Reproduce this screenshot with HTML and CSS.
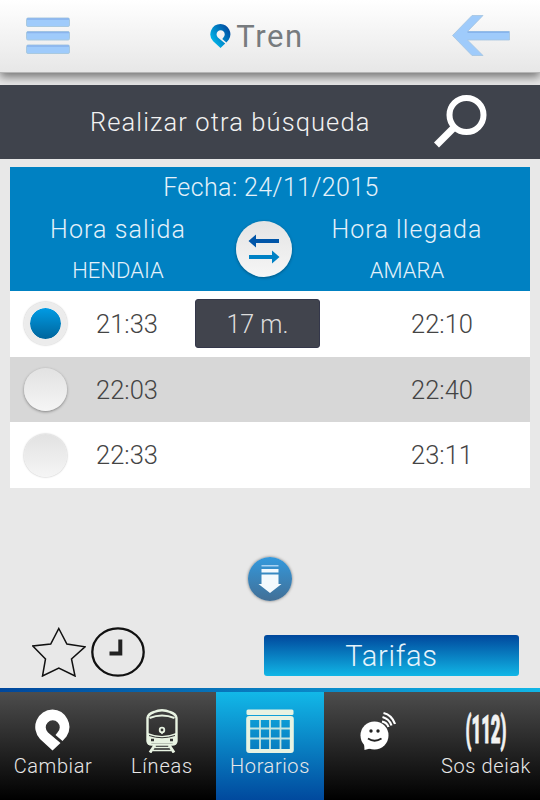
FILE: index.html
```html
<!DOCTYPE html>
<html lang="es">
<head>
    <meta charset="UTF-8">
    <meta name="viewport" content="width=device-width, initial-scale=1.0">
    <title>Tren - Horarios</title>
    <link rel="stylesheet" href="styles.css">
</head>
<body>
    <svg class="defs" width="0" height="0">
        <defs>
            <linearGradient id="pinGradient" x1="0" y1="1" x2="1" y2="0.2">
                <stop offset="0.2" stop-color="#00b4e8"/>
                <stop offset="1" stop-color="#00479d"/>
            </linearGradient>
            <symbol id="pin" viewBox="0 0 35 41">
                <path d="M17.500 0A17.500 17.500 0 0 1 31.500 27L27.500 31.500L20.500 25.500L22.500 23A7 7 0 1 0 13 23L25.500 33.500L17.500 41L5 29.500A17.500 17.500 0 0 1 17.500 0Z"/>
            </symbol>
        </defs>
    </svg>

    <header class="header">
        <svg class="menu-icon" width="44" height="38" viewBox="0 0 44 38">
            <g fill="#9fcbfb" stroke="#a9c9df">
                <rect x="0.5" y="1" width="43" height="8.500" rx="1.500"/>
                <rect x="0.5" y="14.500" width="43" height="8.500" rx="1.500"/>
                <rect x="0.5" y="28" width="43" height="8.500" rx="1.500"/>
            </g>
            <path d="M1 2h42M1 15.500h42M1 29h42" stroke="#8bb4ec" stroke-width="1.500"/>
        </svg>
        <div class="title">
            <svg class="title-pin" width="21" height="24"><use href="#pin"/></svg>
            <h1>Tren</h1>
        </div>
        <svg class="back-icon" width="58" height="42" viewBox="0 0 58 42">
            <path d="M0.500 20.500L20 0.500H31L15.500 16.500H57.500V25H15.500L31 40.500H20Z" fill="#9fcbfb" stroke="#a4c4e0" stroke-width="0.800"/>
            <path d="M15.500 17.200H57" stroke="#7fade8" stroke-width="1.200"/>
        </svg>
    </header>

    <div class="search">
        <span class="search-text">Realizar otra búsqueda</span>
        <svg class="search-icon" width="54" height="54" viewBox="0 0 54 54">
            <circle cx="33.500" cy="20" r="17" fill="none" stroke="#fff" stroke-width="6"/>
            <path d="M21 32.500L3.500 50" stroke="#fff" stroke-width="7"/>
        </svg>
    </div>

    <main class="content">
        <section class="schedule">
            <div class="schedule-head">
                <div class="date">Fecha: 24/11/2015</div>
                <div class="stop stop-from">
                    <div class="stop-label">Hora salida</div>
                    <div class="stop-name">HENDAIA</div>
                </div>
                <button class="swap" aria-label="Cambiar sentido">
                    <svg width="32" height="30" viewBox="0 0 32 30">
                        <path d="M0.500 7L8 0.500V5H31V9H8V13.500Z" fill="#0055a8"/>
                        <path d="M31.500 23L24 16.500V21H1V25H24V29.500Z" fill="#0081c5"/>
                    </svg>
                </button>
                <div class="stop stop-to">
                    <div class="stop-label">Hora llegada</div>
                    <div class="stop-name">AMARA</div>
                </div>
            </div>
            <div class="row">
                <span class="radio checked"></span>
                <span class="time">21:33</span>
                <span class="remaining">17 m.</span>
                <span class="time arrival">22:10</span>
            </div>
            <div class="row alt">
                <span class="radio"></span>
                <span class="time">22:03</span>
                <span class="time arrival">22:40</span>
            </div>
            <div class="row">
                <span class="radio"></span>
                <span class="time">22:33</span>
                <span class="time arrival">23:11</span>
            </div>
        </section>

        <button class="more" aria-label="Ver más">
            <svg width="24" height="28" viewBox="0 0 24 28">
                <path d="M3.500 0H20.500V1.500H3.500Z" fill="#a9d2f2"/>
                <path d="M3.500 4H20.500V7.500H3.500ZM3.500 9.500H20.500V19H23.500L12 28L0.500 19H3.500Z" fill="#f4f9fd"/>
            </svg>
        </button>

        <div class="actions">
            <svg class="star" width="54" height="50" viewBox="0 0 54 50">
                <path d="M26.800 1.500L34.900 17L53 19.800L39.500 32L43 49L26.800 41L10.500 49L13.500 32L0.800 19L18.700 17Z" fill="none" stroke="#111" stroke-width="1.500"/>
            </svg>
            <svg class="clock" width="54" height="50" viewBox="0 0 54 50">
                <ellipse cx="27" cy="25" rx="25.700" ry="23.700" fill="none" stroke="#111" stroke-width="2.300"/>
                <path d="M29.300 12.500V26.500H18.500" fill="none" stroke="#222" stroke-width="4"/>
            </svg>
            <button class="fares">Tarifas</button>
        </div>
    </main>

    <nav class="tabs">
        <a class="tab">
            <svg class="tab-icon" width="35" height="42" fill="#fff"><use href="#pin"/></svg>
            <span class="tab-cambiar">Cambiar</span>
        </a>
        <a class="tab">
            <svg class="tab-icon" width="32" height="44" viewBox="0 0 32 44">
                <g fill="none" stroke="#e8f3e2">
                    <path d="M1.500 9Q2 5 8 3Q16 -0.500 24 3Q30 5 30.500 9V32Q30 35.500 26 35.500H6Q2 35.500 1.500 32Z" stroke-width="2.400"/>
                    <path d="M3.500 9Q16 4 28.500 9" stroke-width="2.200"/>
                    <path d="M9 36L4 43.500M23 36L28 43.500" stroke-width="3"/>
                    <path d="M9 38.500H23M7 41.500H25" stroke-width="1.300"/>
                    <circle cx="16" cy="21" r="2.300" stroke-width="1.800"/>
                </g>
                <path d="M2 24Q16 30 30 24V34H2Z" fill="#e8f3e2"/>
                <path d="M3 26.500Q16 31 29 26.500" fill="none" stroke="#333"/>
                <path d="M5 31h3M24 31h3" stroke="#333" stroke-width="2.500"/>
                <path d="M14 23h4l-2 2.500z" fill="#e8f3e2"/>
            </svg>
            <span class="tab-lineas">Líneas</span>
        </a>
        <a class="tab active">
            <svg class="tab-icon" width="48" height="44" viewBox="0 0 48 44">
                <rect x="0.500" y="0.500" width="47" height="5.500" rx="1.500" fill="#e8f3e2"/>
                <g fill="none" stroke="#e8f3e2">
                    <rect x="2.200" y="9" width="43.600" height="33" rx="1" stroke-width="4"/>
                    <path d="M14 9V42M24 9V42M34.500 9V42M2 19.500H46M2 29.500H46" stroke-width="1.800" opacity="0.850"/>
                </g>
            </svg>
            <span class="tab-horarios">Horarios</span>
        </a>
        <a class="tab">
            <svg class="tab-icon" width="36" height="42" viewBox="0 0 36 42">
                <circle cx="14.500" cy="26.500" r="14" fill="#fff"/>
                <path d="M4 33L4.500 41L12 39Z" fill="#fff"/>
                <circle cx="11" cy="22" r="1.700" fill="#222"/>
                <circle cx="18" cy="22" r="1.700" fill="#222"/>
                <path d="M8 29.500Q14.500 34 21.500 29.500" fill="none" stroke="#222" stroke-width="1.800"/>
                <path d="M22 12.500Q27 13.500 28.500 18M22.500 8Q29.500 10 31.500 16.500M23.500 4Q32 6 35 15" fill="none" stroke="#fff" stroke-width="2.200"/>
            </svg>
        </a>
        <a class="tab">
            <svg class="tab-icon emergency-icon" width="42" height="46" viewBox="0 0 42 46">
                <text class="emergency" transform="scale(1 2.450)" x="0.500" y="14.400" textLength="41" lengthAdjust="spacingAndGlyphs">(112)</text>
            </svg>
            <span class="tab-sos">Sos deiak</span>
        </a>
    </nav>
</body>
</html>
```

FILE: styles.css
```css
* {
    box-sizing: border-box;
}

body {
    margin: 0;
    height: 100vh;
    display: flex;
    flex-direction: column;
    overflow: hidden;
    font-family: Roboto, sans-serif;
    font-weight: 300;
    background-color: #e8e8e8;
}

button {
    border: none;
    padding: 0;
    font-family: inherit;
    font-weight: inherit;
    cursor: pointer;
}

.defs {
    position: absolute;
}

.header {
    flex: none;
    height: 73px;
    margin-bottom: 12px;
    padding: 0 30px 0 26px;
    display: flex;
    justify-content: space-between;
    background: linear-gradient(#fff, #e7e7e7);
    border-bottom: 1px solid #b5b5b5;
    box-shadow: 0 4px 9px rgba(0, 0, 0, 0.5);
}

.menu-icon {
    margin-top: 17px;
}

.back-icon {
    margin-top: 15px;
}

.title {
    display: flex;
    gap: 5px;
    padding: 18px 8px 0 0;
}

.title-pin {
    margin-top: 6px;
    fill: url(#pinGradient);
}

h1 {
    margin: 0;
    font-size: 31px;
    line-height: 38px;
    font-weight: 400;
    letter-spacing: 1.6px;
    color: #777b7e;
}

.search {
    position: relative;
    flex: none;
    height: 74px;
    padding: 0 53px 0 90px;
    display: flex;
    align-items: center;
    justify-content: space-between;
    background-color: #3f434c;
    color: #f2f2f2;
}

.search-text {
    font-size: 25.5px;
    letter-spacing: 1.1px;
}

.content {
    flex: 1;
    padding: 8px 10px 0;
}

.schedule {
    color: #444;
}

.schedule-head {
    height: 124px;
    padding-top: 5px;
    display: grid;
    grid-template-columns: 216px 84px 220px;
    grid-template-rows: 32px 87px;
    background-color: #0081c2;
    color: #e4f1fa;
    text-align: center;
}

.date {
    grid-column: 1 / 4;
    font-size: 25px;
    line-height: 32px;
    letter-spacing: 0.4px;
    padding-left: 2px;
}

.stop-label {
    font-size: 25px;
    line-height: 40px;
    letter-spacing: 1.1px;
    margin-top: 6px;
}

.stop-name {
    font-size: 22px;
    line-height: 41px;
    letter-spacing: 0;
}

.stop-to {
    padding-right: 26px;
}

.swap {
    width: 56px;
    height: 56px;
    margin: 17px 0 0 10px;
    display: grid;
    place-items: center;
    border-radius: 50%;
    background: linear-gradient(#e4e4e4, #f6f6f6);
    box-shadow: 0 1px 3px rgba(0, 0, 0, 0.35);
}

.row {
    height: 65.7px;
    padding: 0 9px 0 14px;
    display: flex;
    align-items: center;
    background-color: #fff;
}

.row.alt {
    background-color: #d7d7d7;
}

.radio {
    width: 43px;
    height: 43px;
    border-radius: 50%;
    background: linear-gradient(#e2e2e2, #f5f5f5);
    box-shadow: 0 1px 3px rgba(0, 0, 0, 0.4);
}

.row:last-child .radio,
.radio.checked {
    box-shadow: 0 0 2px rgba(0, 0, 0, 0.35);
}

.radio.checked {
    border: 6px solid #ececec;
    background: linear-gradient(#009be4, #00659c) padding-box;
}

.time {
    width: 120px;
    font-size: 25.5px;
    text-align: center;
}

.arrival {
    margin-left: auto;
    width: 158px;
}

.remaining {
    width: 125px;
    height: 49px;
    margin-left: 8px;
    font-size: 25px;
    line-height: 49px;
    text-align: center;
    border-radius: 3px;
    background-color: #41444d;
    border: 1px solid #34374a;
    color: #ddd;
}

.more {
    width: 44px;
    height: 44px;
    margin: 69px auto 0 238px;
    display: grid;
    place-items: center;
    border-radius: 50%;
    background: linear-gradient(#3399dd, #426f96);
    box-shadow: 0 0 3px rgba(0, 0, 0, 0.5);
}

.actions {
    margin-top: 26px;
    padding-left: 22px;
    display: flex;
}

.clock {
    margin-left: 5px;
}

.fares {
    width: 255px;
    height: 41px;
    margin: 8px 0 0 119px;
    border-radius: 3px;
    background: linear-gradient(#00479c, #11b6e6);
    color: #e6f3fb;
    font-size: 29px;
    line-height: 43px;
    letter-spacing: 0.7px;
}

.tabs {
    flex: none;
    height: 112px;
    display: grid;
    grid-template-columns: repeat(5, 1fr);
    border-top: 4px solid;
    border-image: linear-gradient(90deg, #00479c, #11b6e6) 1;
    background: linear-gradient(#4d4d4d, #000);
    color: #e8e8e8;
}

.tab {
    display: flex;
    flex-direction: column;
    align-items: center;
    padding-top: 17px;
    font-size: 20px;
    white-space: nowrap;
}

.tab:first-child .tab-icon {
    margin-right: 4px;
}

.tab.active {
    background: linear-gradient(#12b8e8, #00479c);
}

.tab span {
    line-height: 24px;
    margin-top: auto;
    margin-bottom: 24px;
    letter-spacing: 0.6px;
}

.tab .tab-cambiar {
    margin-right: 2px;
}

.tab .tab-lineas {
    letter-spacing: 0.8px;
}

.emergency-icon {
    margin-top: -1px;
}

.emergency {
    font-size: 16px;
    font-weight: 900;
    fill: #f2f2f2;
    stroke: #f2f2f2;
    stroke-width: 0.4;
}
```
